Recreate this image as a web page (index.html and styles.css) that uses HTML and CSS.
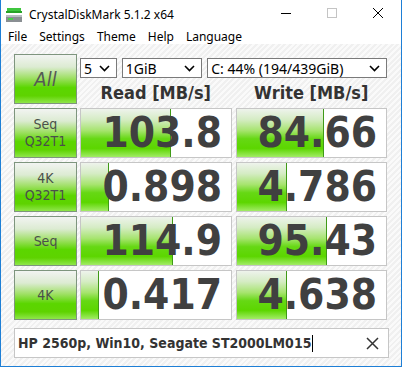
FILE: index.html
```html
<!DOCTYPE html>
<html lang="en">
<head>
    <meta charset="UTF-8">
    <title>CrystalDiskMark 5.1.2 x64</title>
    <link rel="stylesheet" href="styles.css">
</head>
<body>
    <div class="window">
        <div class="titlebar">
            <svg class="appicon" width="18" height="16" viewBox="0 0 18 16">
                <rect x="2" y="1" width="14" height="3" fill="#3fc63f"/>
                <rect x="1" y="4" width="16" height="2" fill="#27a327"/>
                <rect x="1" y="8" width="16" height="7" fill="#8a8f93"/>
                <rect x="1" y="8" width="16" height="2" fill="#b9bec2"/>
                <rect x="3" y="11" width="5" height="2" fill="#46d046"/>
            </svg>
            <span class="title">CrystalDiskMark 5.1.2 x64</span>
            <div class="controls">
                <svg width="46" height="29" viewBox="0 0 46 29"><line x1="18" y1="13.5" x2="28" y2="13.5" stroke="#000" stroke-width="1"/></svg>
                <svg width="46" height="29" viewBox="0 0 46 29"><rect x="18.5" y="8.5" width="9" height="9" fill="none" stroke="#c4c4c4" stroke-width="1"/></svg>
                <svg width="46" height="29" viewBox="0 0 46 29"><path d="M18 8 L28 18 M28 8 L18 18" stroke="#000" stroke-width="1"/></svg>
            </div>
        </div>
        <ul class="menubar">
            <li>File</li>
            <li>Settings</li>
            <li>Theme</li>
            <li>Help</li>
            <li>Language</li>
        </ul>
        <div class="client">
            <div class="grid">
                <div class="btn all">All</div>
                <div class="top">
                    <div class="selects">
                        <div class="select count">5<svg class="chev" width="11" height="7" viewBox="0 0 11 7"><path d="M1 1 L5.5 5.5 L10 1" fill="none" stroke="#000" stroke-width="1.6"/></svg></div>
                        <div class="select size">1GiB<svg class="chev" width="11" height="7" viewBox="0 0 11 7"><path d="M1 1 L5.5 5.5 L10 1" fill="none" stroke="#000" stroke-width="1.6"/></svg></div>
                        <div class="select drive">C: 44% (194/439GiB)<svg class="chev" width="11" height="7" viewBox="0 0 11 7"><path d="M1 1 L5.5 5.5 L10 1" fill="none" stroke="#000" stroke-width="1.6"/></svg></div>
                    </div>
                    <div class="heads">
                        <div>Read [MB/s]</div>
                        <div>Write [MB/s]</div>
                    </div>
                </div>

                <div class="btn">Seq<br>Q32T1</div>
                <div class="cell"><div class="bar" style="width:90px"></div><span class="val">103.8</span></div>
                <div class="cell"><div class="bar" style="width:87px"></div><span class="val">84.66</span></div>

                <div class="btn">4K<br>Q32T1</div>
                <div class="cell"><div class="bar" style="width:28px"></div><span class="val">0.898</span></div>
                <div class="cell"><div class="bar" style="width:50px"></div><span class="val">4.786</span></div>

                <div class="btn">Seq</div>
                <div class="cell"><div class="bar" style="width:92px"></div><span class="val">114.9</span></div>
                <div class="cell"><div class="bar" style="width:90px"></div><span class="val">95.43</span></div>

                <div class="btn">4K</div>
                <div class="cell"><div class="bar" style="width:18px"></div><span class="val">0.417</span></div>
                <div class="cell"><div class="bar" style="width:50px"></div><span class="val">4.638</span></div>
            </div>
            <div class="comment">
                <span class="text">HP 2560p, Win10, Seagate ST2000LM015</span><span class="caret"></span>
                <svg class="clear" width="13" height="13" viewBox="0 0 13 13"><path d="M1 1 L12 12 M12 1 L1 12" stroke="#333" stroke-width="1.5"/></svg>
            </div>
        </div>
    </div>
</body>
</html>
```

FILE: styles.css
```css
*{
    margin: 0;
    padding: 0;
    box-sizing: border-box;
}
body{
    width: 402px;
    height: 367px;
    overflow: hidden;
    background: #fff;
}
.window{
    width: 402px;
    height: 367px;
    border: 1px solid #1e7fd6;
    border-top: none;
    display: flex;
    flex-direction: column;
    font-family: "Noto Sans", "Open Sans", sans-serif;
}
.titlebar{
    height: 29px;
    display: flex;
    align-items: center;
    background: #fff;
}
.appicon{
    margin: 0 6px 0 4px;
}
.title{
    font-size: 12px;
    color: #000;
}
.controls{
    margin-left: auto;
    display: flex;
}
.controls svg{
    display: block;
}
.menubar{
    list-style-type: none;
    display: flex;
    height: 15px;
    align-items: center;
    padding-left: 7px;
    font-size: 12px;
    background: #fff;
}
.menubar li{
    margin-right: 12px;
}
.client{
    flex: 1;
    padding: 10px 13px 0 13px;
    background-color: #f3f3f3;
    background-image: repeating-linear-gradient(135deg, #f0f0f0 0px, #f0f0f0 2px, #fafafa 2px, #fafafa 4px);
}
.grid{
    display: grid;
    grid-template-columns: 63px 152px 152px;
    grid-auto-rows: 50px;
    column-gap: 3px;
    row-gap: 4px;
}
.btn{
    border: 1px solid #7e957e;
    background: linear-gradient(#f2f4f2 0%, #dcebd2 25%, #9fe065 48%, #5bd600 68%, #5ed300 85%, #8fe64a 100%);
    display: flex;
    flex-direction: column;
    align-items: center;
    justify-content: center;
    font-family: "DejaVu Sans Condensed", "DejaVu Sans", sans-serif;
    font-size: 14px;
    line-height: 17px;
    color: #4a504a;
    text-align: center;
}
.all{
    font-style: italic;
    font-size: 20px;
    color: #555a55;
}
.top{
    grid-column: 2 / 4;
    display: flex;
    flex-direction: column;
}
.selects{
    display: flex;
    margin-top: 4px;
    height: 20px;
    gap: 5px;
}
.select{
    background: #fff;
    border: 1px solid #7a7a7a;
    display: flex;
    align-items: center;
    justify-content: space-between;
    padding: 0 6px 0 3px;
    font-size: 14px;
    color: #000;
}
.count{
    width: 37px;
}
.size{
    width: 81px;
}
.drive{
    width: 181px;
}
.heads{
    flex: 1;
    display: flex;
    gap: 4px;
}
.heads div{
    width: 152px;
    display: flex;
    align-items: center;
    justify-content: center;
    font-family: "DejaVu Sans Condensed", "DejaVu Sans", sans-serif;
    font-weight: bold;
    font-size: 18px;
    color: #333;
    padding-top: 2px;
}
.cell{
    background: #fff;
    border: 1px solid #c6c6c6;
    display: grid;
    overflow: hidden;
}
.cell + .cell{
    margin-left: 1px;
}
.bar,
.val{
    grid-area: 1 / 1;
}
.bar{
    height: 100%;
    background: linear-gradient(#eef3ec 0%, #d5ecc4 22%, #a6e46e 45%, #66d814 62%, #5cd600 82%, #a2ec66 100%);
    border-right: 1px solid #3f9a17;
}
.val{
    align-self: center;
    justify-self: end;
    padding-right: 9px;
    font-family: "DejaVu Sans Condensed", "DejaVu Sans", sans-serif;
    font-weight: bold;
    font-size: 42px;
    line-height: 1;
    color: #404040;
}
.comment{
    margin-top: 8px;
    height: 30px;
    width: 375px;
    background: #fff;
    border: 1px solid #c6c6c6;
    display: flex;
    align-items: center;
    padding: 0 9px 0 3px;
}
.comment .text{
    font-family: "DejaVu Sans Condensed", "DejaVu Sans", sans-serif;
    font-weight: bold;
    font-size: 14px;
    color: #333;
}
.caret{
    width: 1px;
    height: 17px;
    background: #000;
    margin-left: 1px;
}
.clear{
    margin-left: auto;
}
```
